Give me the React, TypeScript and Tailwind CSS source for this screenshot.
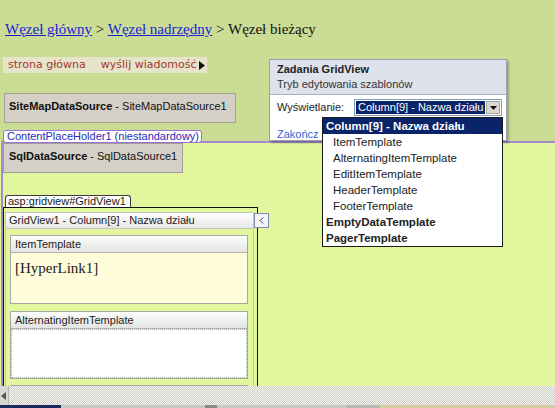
import { ChevronLeft } from "lucide-react"

const templates = [
  { label: "Column[9] - Nazwa działu", kind: "selected" },
  { label: "ItemTemplate", kind: "child" },
  { label: "AlternatingItemTemplate", kind: "child" },
  { label: "EditItemTemplate", kind: "child" },
  { label: "HeaderTemplate", kind: "child" },
  { label: "FooterTemplate", kind: "child" },
  { label: "EmptyDataTemplate", kind: "group" },
  { label: "PagerTemplate", kind: "group" },
]

const TemplateHeader = ({ title }: { title: string }) => (
  <div className="flex h-[17px] items-center border-b border-[#b4b4ac] bg-gradient-to-b from-[#fdfdfd] to-[#e4e4e2] pl-[4px] text-[11px] text-[#222]">
    {title}
  </div>
)

const App = () => {
  return (
    <div className="relative flex h-[408px] w-[555px] flex-col overflow-hidden bg-[#e1f69d] font-['Liberation_Sans',Arial,sans-serif]">
      {/* top of the master page */}
      <div className="flex h-[141px] shrink-0 flex-col bg-[#cbdc95]">
        <div className="ml-[5px] mt-[20px] shrink-0 font-['Liberation_Serif','Times_New_Roman',serif] text-[15px] leading-[18px] text-[#111]">
          <span className="text-[#1c1cd4] underline">Węzeł główny</span>
          <span> &gt; </span>
          <span className="text-[#1c1cd4] underline">Węzeł nadrzędny</span>
          <span> &gt; Węzeł bieżący</span>
        </div>

        <div className="ml-[3px] mt-[19px] flex h-[16px] w-[204px] shrink-0 items-center bg-[#e6e4cb] pl-[5px] font-['DejaVu_Sans',Verdana,sans-serif] text-[11px] text-[#a4382c]">
          <span>strona główna</span>
          <span className="ml-[15px]">wyślij wiadomość</span>
          <svg width="6" height="9" viewBox="0 0 6 9" className="ml-[3px]">
            <path d="M0 0 L6 4.5 L0 9 Z" fill="#111" />
          </svg>
        </div>

        <div className="ml-[4px] mt-[20px] h-[30px] w-[232px] shrink-0 border border-[#a29e96] bg-[#d4d0c8] pl-[4px] pt-[6px] text-[11px] leading-[13px] text-[#111]">
          <span className="font-bold">SiteMapDataSource</span> - SiteMapDataSource1
        </div>

        <div className="relative z-10 ml-[3px] mt-[7px] flex h-[13px] w-[199px] shrink-0 items-center rounded-[3px] border border-[#9a6fd6] bg-white pl-[3px] text-[11px] text-[#2a2ab4]">
          ContentPlaceHolder1 (niestandardowy)
        </div>
      </div>

      {/* content placeholder */}
      <div className="ml-[1px] min-h-0 flex-1 overflow-hidden border-l-2 border-t-2 border-[#a58bc9] bg-[#e1f69d]">
        <div className="flex h-[30px] w-[180px] border border-[#a29e96] bg-[#d4d0c8] pl-[5px] pt-[6px] text-[11px] leading-[13px] text-[#111]">
          <span className="font-bold">SqlDataSource</span>
          <span>&nbsp;- SqlDataSource1</span>
        </div>

        <div className="ml-[2px] mt-[22px] flex h-[12px] w-[126px] items-center rounded-t-[3px] border border-b-0 border-[#3a3a3a] bg-white pl-[2px] text-[11px] text-[#1a1a1a]">
          asp:gridview#GridView1
        </div>

        <div className="relative h-[200px] w-[255px] border border-[#111] px-[1px] pt-[4px]">
          <div className="h-full w-[249px] border border-[#c4c4bc]">
            <div className="flex h-[16px] items-center border-b border-[#c4c4bc] bg-gradient-to-b from-white to-[#e6e6e4] pl-[3px] text-[11px] text-[#222]">
              GridView1 - Column[9] - Nazwa działu
            </div>

            <div className="ml-[4px] mt-[6px] w-[238px] border border-[#a8a8a0]">
              <TemplateHeader title="ItemTemplate" />
              <div className="h-[50px] bg-[#fffcda] pl-[4px] pt-[6px] font-['Liberation_Serif','Times_New_Roman',serif] text-[15px] leading-[18px] text-[#222]">
                [HyperLink1]
              </div>
            </div>

            <div className="ml-[4px] mt-[7px] w-[238px] border border-[#a8a8a0]">
              <TemplateHeader title="AlternatingItemTemplate" />
              <div className="h-[49px] border border-dotted border-[#a8a8a8] bg-white" />
            </div>

            <div className="ml-[4px] mt-[6px] h-[17px] w-[238px] border border-[#a8a8a0] bg-gradient-to-b from-[#fdfdfd] to-[#e4e4e2]" />
          </div>

          <div className="absolute left-[250px] top-[5px] flex h-[15px] w-[15px] items-center justify-center border border-[#7d8cae] bg-[#f2f3f8] text-[#2a2a5a]">
            <ChevronLeft size={11} strokeWidth={2} />
          </div>
        </div>
      </div>

      {/* horizontal scroll bar */}
      <div className="flex h-[19px] shrink-0 bg-[#e6e6e0] bg-[image:repeating-conic-gradient(#cbcbc4_0%_25%,#f8f8f4_0%_50%)] bg-[length:2px_2px]">
        <div className="flex w-[9px] items-center justify-start border-r border-[#b8b8b0] bg-[#d8d8d2]">
          <svg width="5" height="8" viewBox="0 0 5 8" className="ml-[1px]">
            <path d="M5 0 L0 4 L5 8 Z" fill="#555" />
          </svg>
        </div>
      </div>

      {/* status strip */}
      <div className="flex h-[3px] shrink-0">
        <div className="w-[61px] bg-[#1b2a5a]" />
        <div className="w-[144px] bg-[#c8c8c4]" />
        <div className="w-[12px] bg-[#8a8a86]" />
        <div className="w-[130px] bg-[#c8c8c4]" />
        <div className="w-[33px] bg-[#b8b8b4]" />
        <div className="flex-1 bg-[#d8cba4]" />
      </div>

      {/* GridView smart tag panel */}
      <div className="absolute left-[269px] top-[59px] h-[82px] w-[238px] border border-[#9aa0b2] bg-white shadow-[2px_2px_2px_rgba(0,0,0,0.25)]">
        <div className="h-[35px] border-b border-[#aab0c0] bg-[#dee2eb] pl-[7px] pt-[2px] text-[11px] leading-[15px] text-[#222]">
          <div className="font-bold">Zadania GridView</div>
          <div className="text-[#333]">Tryb edytowania szablonów</div>
        </div>
        <div className="pt-[4px] text-[11px] text-[#222]">
          <div className="flex h-[17px] items-center pl-[7px]">
            <span className="w-[77px]">Wyświetlanie:</span>
            <div className="flex h-[17px] w-[148px] border border-[#7f9db9] bg-white p-[1px]">
              <div className="flex flex-1 items-center overflow-hidden whitespace-nowrap bg-[#0a246a] pl-[2px] text-[11px] text-white">
                Column[9] - Nazwa działu
              </div>
              <div className="ml-[1px] flex w-[14px] items-center justify-center border border-[#a8a49c] bg-[#dcd8d0]">
                <svg width="7" height="4" viewBox="0 0 7 4">
                  <path d="M0 0 L7 0 L3.5 4 Z" fill="#111" />
                </svg>
              </div>
            </div>
          </div>
          <div className="mt-[10px] whitespace-nowrap pl-[7px] text-[#3366cc]">Zakończ e</div>
        </div>
      </div>

      {/* open drop-down list */}
      <div className="absolute left-[322px] top-[117px] w-[181px] border border-[#1a1a1a] bg-white text-[#222]">
        {templates.map((t) => (
          <div
            key={t.label}
            className={
              t.kind === "selected"
                ? "h-[16px] bg-[#0a246a] pl-[3px] text-[11.5px] font-bold leading-[16px] text-white"
                : t.kind === "group"
                  ? "h-[16px] pl-[3px] text-[11.5px] font-bold leading-[16px]"
                  : "h-[16px] pl-[10px] text-[11.5px] leading-[16px]"
            }
          >
            {t.label}
          </div>
        ))}
      </div>
    </div>
  )
}

export default App
